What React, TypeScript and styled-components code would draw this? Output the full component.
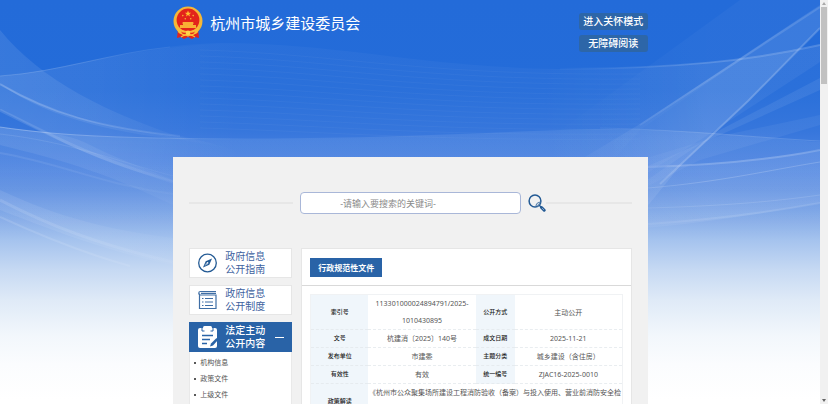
import React from "react";
import styled, { createGlobalStyle } from "styled-components";

const GlobalStyle = createGlobalStyle`
  *, *::before, *::after { box-sizing: border-box; }
  body {
    margin: 0;
    overflow: hidden;
    background: #fff;
    font-family: "Noto Sans", "Noto Sans CJK SC", sans-serif;
  }
  button, input { font-family: inherit; }
`;

const Viewport = styled.div`
  display: grid;
  grid-template-columns: minmax(0, 1fr) 8px;
  height: 100vh;
`;

const Page = styled.div`
  position: relative;
  overflow: hidden;
  background: linear-gradient(
    #236bd9 0px, #246cd9 90px, #3072db 130px, #447edf 160px, #5f90e2 190px,
    #80a8e7 215px, #a5c3ee 240px, #c6d9f3 270px, #dfeaf7 300px,
    #f2f7fc 335px, #fbfcfe 365px, #fff 400px
  );
`;

const Waves = styled.svg`
  position: absolute;
  top: 0;
  left: 0;
  width: 100%;
  height: 404px;
`;

const Container = styled.div`
  position: relative;
  width: 58%;
  min-width: 474px;
  max-width: 1200px;
  padding-left: 1px;
  margin: 0 auto;
`;

const Header = styled.header`
  display: flex;
  justify-content: space-between;
  align-items: flex-start;
  height: 157px;
  padding-top: 6px;
`;

const Brand = styled.div`
  display: flex;
  align-items: center;
  gap: 7px;
`;

const SiteName = styled.h1`
  margin: 0;
  font-size: 15px;
  line-height: 20px;
  font-weight: 400;
  color: #fff;
`;

const Tools = styled.div`
  display: flex;
  flex-direction: column;
  gap: 5px;
  padding-top: 7px;
`;

const ToolButton = styled.button`
  width: 69px;
  height: 17px;
  padding: 0;
  border: 0;
  border-radius: 3px;
  background: #2d66a8;
  color: #fff;
  font-size: 10px;
  line-height: 17px;
  font-weight: 500;
`;

const Panel = styled.main`
  min-height: 600px;
  padding: 35px 16px 0;
  background: #f1f1f1;
`;

const SearchForm = styled.form`
  display: grid;
  grid-template-columns: 104px 221px minmax(0, 1fr);
  align-items: center;
  column-gap: 7px;
  margin-bottom: 34px;
`;

const SearchEnd = styled.div`
  display: flex;
  align-items: center;
`;

const Rule = styled.span`
  flex: 1;
  height: 2px;
  background: #e7e7e7;
`;

const SearchInput = styled.input`
  width: 100%;
  height: 22px;
  padding: 0 39px;
  border: 1px solid #a9b7d8;
  border-radius: 4px;
  background: #fff;
  color: #666;
  font-size: 9px;
  &::placeholder { color: #8a8a8a; opacity: 1; }
`;

const IconButton = styled.button`
  display: flex;
  padding: 0;
  border: 0;
  background: none;
`;

const Columns = styled.div`
  display: grid;
  grid-template-columns: 103px minmax(0, 1fr);
  align-items: start;
  column-gap: 9px;
`;

const SideNav = styled.nav`
  display: flex;
  flex-direction: column;
  gap: 7px;
`;

const NavLink = styled.a`
  display: flex;
  align-items: center;
  gap: 8px;
  height: 30px;
  padding: 0 8px;
  border: 1px solid #e6e6e6;
  background: #fff;
  color: #3d62a0;
  font-size: 10px;
  line-height: 13px;
  text-decoration: none;
`;

const NavToggle = styled.button`
  display: flex;
  align-items: center;
  gap: 7px;
  width: 100%;
  height: 30px;
  padding: 0 8px 0 9px;
  border: 0;
  background: #2963a7;
  color: #fff;
  font-size: 10px;
  line-height: 13px;
  font-weight: 500;
  text-align: left;
`;

const Minus = styled.span`
  width: 9px;
  height: 1px;
  margin-left: auto;
  background: #fff;
`;

const SubList = styled.ul`
  margin: 0;
  padding: 3px 0 40px 4px;
  border: solid #e9e9e9;
  border-width: 0 1px 1px;
  list-style: none;
  background: #fff;
`;

const SubItem = styled.li`
  display: flex;
  align-items: center;
  gap: 4px;
  font-size: 7px;
  line-height: 16px;
  &::before {
    content: "";
    width: 2px;
    height: 2px;
    border-radius: 50%;
    background: #222;
  }
`;

const SubLink = styled.a`
  color: #555;
  text-decoration: none;
`;

const Document = styled.section`
  border: 1px solid #e6e6e6;
  background: #fff;
`;

const DocumentHead = styled.div`
  display: flex;
  padding: 9px 8px 8px;
  border-bottom: 1px solid #d9d9d9;
`;

const Tag = styled.h2`
  margin: 0;
  padding: 0 8px;
  background: #2963a7;
  color: #fff;
  font-size: 8px;
  line-height: 19px;
  font-weight: 700;
`;

const DocumentBody = styled.div`
  padding: 8px;
`;

const MetaTable = styled.table`
  width: 100%;
  table-layout: fixed;
  border-collapse: collapse;
  border: 1px solid #f0f2f4;
  text-align: center;
  line-height: 17px;
`;

const Column = styled.col<{ $share: number }>`
  width: ${(p) => p.$share}%;
`;

const Label = styled.th`
  padding: 0;
  border-bottom: 1px dashed #e6ebef;
  background: #f0f6fb;
  color: #222;
  font-size: 6px;
  font-weight: 500;
`;

const Value = styled.td`
  padding: 0;
  border-bottom: 1px dashed #e9edf0;
  color: #555;
  font-size: 7px;
`;

const Scrollbar = styled.div`
  display: flex;
  flex-direction: column;
  align-items: center;
  padding: 2px 0;
  background: #f1f1f1;
`;

const Thumb = styled.div`
  width: 6px;
  height: 19vh;
  margin: 2px 0 auto;
  background: #c1c1c1;
`;

const Background = () => (
  <Waves viewBox="0 0 820 404" preserveAspectRatio="none" aria-hidden="true">
    <defs>
      <linearGradient id="fade" x1="0" y1="0" x2="0" y2="404" gradientUnits="userSpaceOnUse">
        <stop offset="0" stopColor="#fff" />
        <stop offset="0.35" stopColor="#fff" />
        <stop offset="0.6" stopColor="#fff" stopOpacity="0" />
      </linearGradient>
      <linearGradient id="left" x1="0" y1="0" x2="240" y2="0" gradientUnits="userSpaceOnUse">
        <stop offset="0" stopColor="#fff" />
        <stop offset="0.4" stopColor="#fff" stopOpacity="0.8" />
        <stop offset="1" stopColor="#fff" stopOpacity="0" />
      </linearGradient>
      <linearGradient id="right" x1="820" y1="0" x2="540" y2="0" gradientUnits="userSpaceOnUse">
        <stop offset="0" stopColor="#fff" />
        <stop offset="0.4" stopColor="#fff" />
        <stop offset="1" stopColor="#fff" stopOpacity="0" />
      </linearGradient>
    </defs>
    <path d="M0 76C60 72 130 45 220 43C340 43 420 67 560 69C680 68 750 60 820 44V260H0Z" fill="url(#fade)" opacity="0.03" />
    <path d="M0 76C60 72 130 45 240 43V150C140 134 50 115 0 84Z" fill="url(#left)" opacity="0.06" />
    <path d="M0 30C40 80 110 115 190 140C130 136 50 120 0 84Z" fill="url(#left)" opacity="0.09" />
    <path d="M0 84C50 112 100 128 180 136C200 140 240 150 250 157L173 182C90 160 60 140 0 110Z" fill="url(#left)" opacity="0.12" />
    <path d="M0 127C60 135 100 138 180 138C350 140 450 134 560 130C660 126 720 135 820 142V260H0Z" fill="url(#fade)" opacity="0.08" />
    <path d="M0 127C40 131 70 134 90 145C120 160 150 170 173 180V205C100 170 60 160 0 145Z" fill="url(#left)" opacity="0.08" />
    <path d="M0 190C60 218 110 230 173 238V265C100 250 40 225 0 210Z" fill="url(#left)" opacity="0.08" />
    <g fill="none" stroke="url(#left)">
      <path d="M0 84C50 113 100 128 180 136" strokeWidth="2" opacity="0.2" />
      <path d="M0 76C60 72 110 53 170 47" opacity="0.15" />
      <path d="M0 110C60 140 90 156 173 182" strokeWidth="3" opacity="0.12" />
      <path d="M0 127C60 136 120 138 230 139" opacity="0.3" />
      <path d="M0 134C70 142 120 162 173 176" opacity="0.1" />
      <path d="M0 153C60 163 100 184 173 194" strokeWidth="2" opacity="0.08" />
      <path d="M0 200C50 226 100 245 173 262" strokeWidth="3" opacity="0.12" />
      <path d="M0 217C50 240 90 255 130 266" strokeWidth="2" opacity="0.12" />
    </g>
    <path d="M820 5L640 124L530 190V240H620L680 166L750 100L820 28Z" fill="url(#right)" opacity="0.11" />
    <path d="M740 0L540 145V240L640 130L820 5V0Z" fill="url(#right)" opacity="0.03" />
    <path d="M540 69C680 69 770 58 820 45V62L700 140L540 240Z" fill="url(#right)" opacity="0.05" />
    <path d="M820 78L720 130L640 185V228C700 224 770 212 820 203V150C780 156 720 165 648 166L720 135L820 90Z" fill="url(#right)" opacity="0.07" />
    <path d="M820 115L720 136L640 160V190L700 160L820 125Z" fill="url(#right)" opacity="0.05" />
    <g fill="none" stroke="url(#right)">
      <path d="M820 7L640 125" strokeWidth="2" opacity="0.12" />
      <path d="M820 28L748 101L660 184" strokeWidth="2" opacity="0.18" />
      <path d="M560 69C680 68 750 61 820 45" strokeWidth="2" opacity="0.16" />
      <path d="M600 128C690 130 760 138 820 141" opacity="0.15" />
      <path d="M648 167C720 165 770 160 820 150" strokeWidth="2" opacity="0.18" />
      <path d="M648 188C720 182 770 170 820 162" opacity="0.18" />
      <path d="M648 208C720 206 770 202 820 195" opacity="0.12" />
      <path d="M648 224C720 219 770 212 820 203" strokeWidth="2" opacity="0.1" />
    </g>
    <g fill="none" stroke="#fff" opacity="0.03">
      {Array.from({ length: 14 }, (_, i) => (
        <path key={i} d={`M200 ${50 + i * 6}C340 ${54 + i * 6} 420 ${76 + i * 5} 640 ${74 + i * 5}`} />
      ))}
    </g>
  </Waves>
);

const Emblem = () => (
  <svg width="30" height="34" viewBox="0 0 30 34" aria-hidden="true">
    <path d="M5 23L4 32l4-1 3 2 4-2 4 2 3-2 4 1-1-9z" fill="#e3241b" />
    <ellipse cx="15" cy="15" rx="14.5" ry="14.5" fill="#f6b737" />
    <circle cx="15" cy="14" r="11.4" fill="#e3241b" />
    <path d="M15 4.6l.9 2.1 2.2.1-1.8 1.4.7 2.2-2-1.3-2 1.3.7-2.2-1.8-1.4 2.2-.1z" fill="#ffc030" />
    <g fill="#f9b234">
      <circle cx="9.8" cy="9.6" r=".8" />
      <circle cx="20.2" cy="9.6" r=".8" />
      <circle cx="12.3" cy="12.8" r=".8" />
      <circle cx="17.7" cy="12.8" r=".8" />
      <path d="M10 16h10l1 1.4h-1V19h3v3H7v-3h3v-1.6H9z" />
    </g>
    <path d="M3.6 21q5 4 11.4 4t11.4-4l-2 6q-4 2.5-9.4 2.5T5.6 27z" fill="#f9bd38" />
    <path d="M8 25.500q3.500 2.500 7 0 3.500 2.500 7 0l-1.500 2.300q-2.800 1-5.500-.4-2.700 1.400-5.500.4z" fill="#e3241b" />
    <circle cx="15" cy="27" r="2.4" fill="#ffd34a" />
    <path d="M8 31q4-3 7-1 3-2 7 1" fill="none" stroke="#f9bd38" strokeWidth="1.2" />
  </svg>
);

const SearchIcon = () => (
  <svg width="18" height="18" viewBox="0 0 18 18" fill="none" aria-hidden="true">
    <circle cx="7" cy="7" r="5.9" stroke="#235a94" strokeWidth="1.5" />
    <path d="M8 12q.5-3.500 4.500-4M9.500 12.500l2.500-3" stroke="#5c84ae" strokeWidth="1.2" />
    <path d="M11 11l3 3" stroke="#235a94" strokeWidth="1.4" />
    <path d="M13.500 13.500l2.700 2.700" stroke="#235a94" strokeWidth="3" strokeLinecap="round" />
    <path d="M14 14l2 2" stroke="#a9c2dc" strokeWidth=".7" />
  </svg>
);

const CompassIcon = () => (
  <svg width="19" height="20" viewBox="0 0 19 20" aria-hidden="true">
    <circle cx="9.5" cy="10" r="8.8" fill="none" stroke="#235a94" strokeWidth="1.3" />
    <path d="M14 5.5L11.300 11.800 5 14.500 7.700 8.200z" fill="#235a94" />
    <path d="M6.500 13l1.900-3.500 1.600 1.600z" fill="#9db8d6" />
    <circle cx="9.6" cy="9.9" r=".8" fill="#fff" />
  </svg>
);

const BookIcon = () => (
  <svg width="19" height="20" viewBox="0 0 19 20" fill="none" stroke="#3f6ea5" aria-hidden="true">
    <path d="M18 1.500H2.500a1.700 1.700 0 0 0 0 3.500H18v13.500H1.500V3.500M3 3.300h15" strokeWidth="1.2" />
    <path d="M4 8.500h1.500M7 8.500h8M4 12h1.500M7 12h8M4 15.500h1.500M7 15.500h8" strokeWidth="1.2" />
  </svg>
);

const ClipboardIcon = () => (
  <svg width="20" height="24" viewBox="0 0 20 24" aria-hidden="true">
    <rect x="0" y="3" width="19" height="20" rx="2" fill="#fff" />
    <path d="M4 1v5h2.500M15 1v5h-2.500" fill="none" stroke="#2963a7" strokeWidth="1" />
    <rect x="5" y="1" width="9" height="4" rx="1.5" fill="#fff" />
    <path d="M4 10.500h11M4 14.500h8M4 18.500h5" stroke="#2963a7" strokeWidth="1.3" />
    <path d="M18.500 13l-5.500 5.500-1 3 3-1 5-5.500z" fill="#2963a7" />
  </svg>
);

const Arrow = ({ down = false }: { down?: boolean }) => (
  <svg width="4" height="3" viewBox="0 0 4 3" aria-hidden="true">
    <path d={down ? "M0 0h4L2 3z" : "M0 3h4L2 0z"} fill={down ? "#666" : "#aaa"} />
  </svg>
);

const rows = [
  ["索引号", "113301000024894791/2025-1010430895", "公开方式", "主动公开"],
  ["文号", "杭建消〔2025〕140号", "成文日期", "2025-11-21"],
  ["发布单位", "市建委", "主题分类", "城乡建设（含住房）"],
  ["有效性", "有效", "统一编号", "ZJAC16-2025-0010"],
];

export default function App() {
  return (
    <>
      <GlobalStyle />
      <Viewport lang="zh-CN">
        <Page>
          <Background />
          <Container>
            <Header>
              <Brand>
                <Emblem />
                <SiteName>杭州市城乡建设委员会</SiteName>
              </Brand>
              <Tools>
                <ToolButton type="button">进入关怀模式</ToolButton>
                <ToolButton type="button">无障碍阅读</ToolButton>
              </Tools>
            </Header>
            <Panel>
              <SearchForm role="search">
                <Rule />
                <SearchInput aria-label="搜索" placeholder="-请输入要搜索的关键词-" />
                <SearchEnd>
                  <IconButton type="button" aria-label="搜索">
                    <SearchIcon />
                  </IconButton>
                  <Rule />
                </SearchEnd>
              </SearchForm>
              <Columns>
                <SideNav>
                  <NavLink href="#guide">
                    <CompassIcon />
                    <span>政府信息<br />公开指南</span>
                  </NavLink>
                  <NavLink href="#system">
                    <BookIcon />
                    <span>政府信息<br />公开制度</span>
                  </NavLink>
                  <div>
                    <NavToggle type="button" aria-expanded="true">
                      <ClipboardIcon />
                      <span>法定主动<br />公开内容</span>
                      <Minus />
                    </NavToggle>
                    <SubList>
                      {["机构信息", "政策文件", "上级文件"].map((text) => (
                        <SubItem key={text}>
                          <SubLink href="#list">{text}</SubLink>
                        </SubItem>
                      ))}
                    </SubList>
                  </div>
                </SideNav>
                <Document>
                  <DocumentHead>
                    <Tag>行政规范性文件</Tag>
                  </DocumentHead>
                  <DocumentBody>
                    <MetaTable>
                      <colgroup>
                        <Column $share={18.5} />
                        <Column $share={34.5} />
                        <Column $share={12.5} />
                        <Column $share={34.5} />
                      </colgroup>
                      <tbody>
                        {rows.map(([a, b, c, d]) => (
                          <tr key={a}>
                            <Label scope="row">{a}</Label>
                            <Value>{b}</Value>
                            <Label scope="row">{c}</Label>
                            <Value>{d}</Value>
                          </tr>
                        ))}
                        <tr>
                          <Label scope="row">政策解读</Label>
                          <Value colSpan={3}>
                            《杭州市公众聚集场所建设工程消防验收（备案）与投入使用、营业前消防安全检
                            <br />
                            &nbsp;
                          </Value>
                        </tr>
                      </tbody>
                    </MetaTable>
                  </DocumentBody>
                </Document>
              </Columns>
            </Panel>
          </Container>
        </Page>
        <Scrollbar aria-hidden="true">
          <Arrow />
          <Thumb />
          <Arrow down />
        </Scrollbar>
      </Viewport>
    </>
  );
}
